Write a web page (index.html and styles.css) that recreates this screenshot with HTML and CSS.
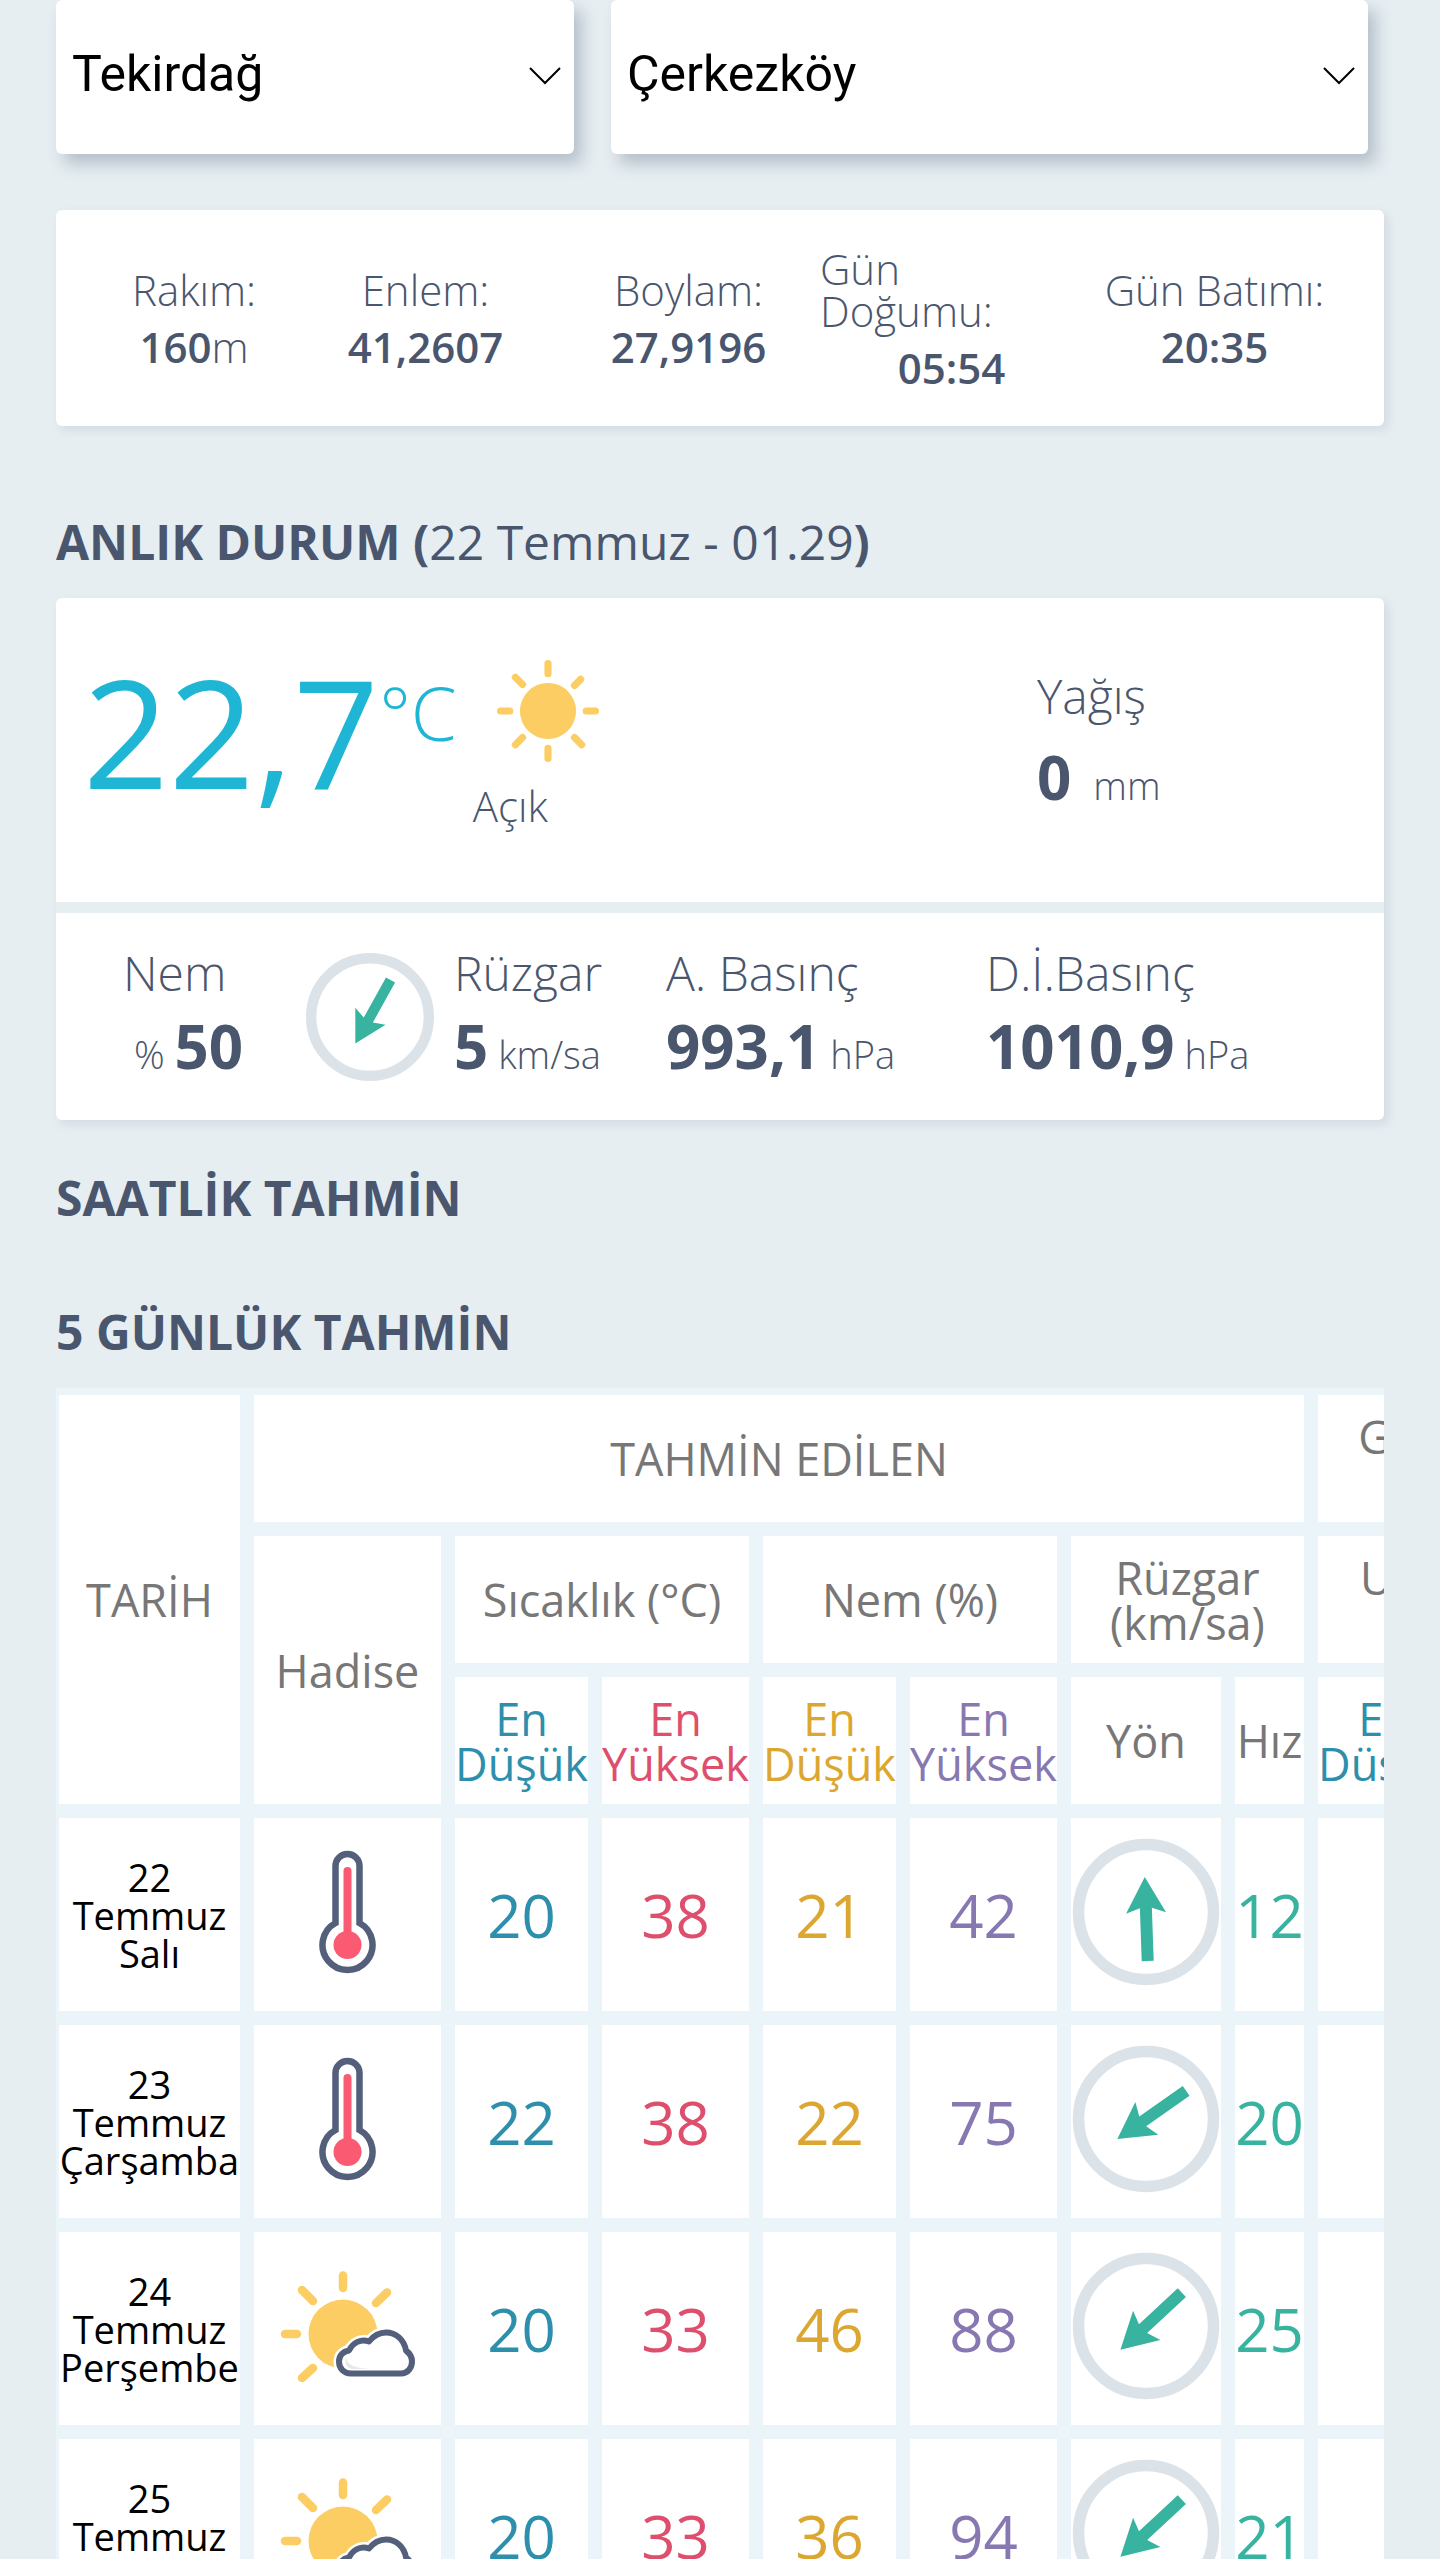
FILE: index.html
```html
<!DOCTYPE html>
<html lang="tr">
<head>
  <meta charset="UTF-8">
  <meta name="viewport" content="width=device-width, initial-scale=1.0">
  <title>Çerkezköy Hava Durumu</title>
  <link rel="stylesheet" href="styles.css">
</head>
<body>
  <!-- Shared icons -->
  <svg class="sprite" aria-hidden="true">
    <symbol id="chevron" viewBox="0 0 32 18">
      <path d="M1 1l15 15L31 1" fill="none" stroke="#000" stroke-width="2"/>
    </symbol>
    <symbol id="hot" viewBox="0 0 187 193">
      <path d="M81.5 105V48a12 12 0 0 1 24 0v57a25 25 0 1 1-24 0z" fill="#fff" stroke="#535f7b" stroke-width="6.5"/>
      <path d="M93.500 53v70" stroke="#fa5a72" stroke-width="8" stroke-linecap="round"/>
      <circle cx="93.500" cy="127" r="14" fill="#fa5a72"/>
    </symbol>
    <symbol id="cloudy" viewBox="0 0 187 193">
      <circle cx="89" cy="102" r="34.500" fill="#fbcd63"/>
      <path d="M89 43.500V56M31 102h12M48 58l11 11M133 60.500L122 71M48 146l11-10" fill="none" stroke="#fbcd63" stroke-width="8.500" stroke-linecap="round"/>
      <path d="M97 141.500h50c7 0 11-6 11-12 0-5-2-8-6-11-2-11-10-18-20-18-8 0-13 4-17 9-8-3-16 1-20 9-6 1-10 5-10 11 0 7 5 12 12 12z" fill="#fff" stroke="#fff" stroke-width="11"/>
      <path d="M97 141.500h50c7 0 11-6 11-12 0-5-2-8-6-11-2-11-10-18-20-18-8 0-13 4-17 9-8-3-16 1-20 9-6 1-10 5-10 11 0 7 5 12 12 12z" fill="#fff" stroke="#535f7b" stroke-width="6" stroke-linejoin="round"/>
      <path d="M92 125c1 8 8 11 24 12H99c-6 0-9-5-7-12z" fill="#e6e8ea"/>
    </symbol>
    <symbol id="ring" viewBox="0 0 150 193">
      <circle cx="75" cy="94" r="67.500" fill="none" stroke="#dbe2e8" stroke-width="11.500"/>
    </symbol>
  </svg>

  <main class="page">
    <form class="location">
      <div class="select-box">
        <select aria-label="İl">
          <option>Tekirdağ</option>
        </select>
        <svg class="chevron"><use href="#chevron"/></svg>
      </div>
      <div class="select-box">
        <select aria-label="İlçe">
          <option>Çerkezköy</option>
        </select>
        <svg class="chevron"><use href="#chevron"/></svg>
      </div>
    </form>

    <section class="card station">
      <div class="station-item"><span>Rakım:</span><div><b>160</b>m</div></div>
      <div class="station-item"><span>Enlem:</span><div><b>41,2607</b></div></div>
      <div class="station-item"><span>Boylam:</span><div><b>27,9196</b></div></div>
      <div class="station-item wrapped"><span>Gün<br>Doğumu:</span><div><b>05:54</b></div></div>
      <div class="station-item"><span>Gün Batımı:</span><div><b>20:35</b></div></div>
    </section>

    <h2 class="first">ANLIK DURUM (<span>22 Temmuz - 01.29</span>)</h2>
    <section class="card current">
      <div class="current-top">
        <div class="temperature">
          <div class="degree">22,7</div>
          <div class="unit">°C</div>
          <div class="condition">
            <svg class="sun" viewBox="0 0 100 100">
              <circle cx="50" cy="50" r="27.500" fill="#fbcd63"/>
              <path d="M50 3.500v10M50 86.500v10M3.500 50h9M87.500 50h9M18 17l7 7M82 19l-6 6M18 83l7-7M83 83l-7-7" fill="none" stroke="#fbcd63" stroke-width="7" stroke-linecap="round"/>
            </svg>
            <div>Açık</div>
          </div>
        </div>
        <div class="rain">
          <div class="label">Yağış</div>
          <div class="value rain-value"><b>0</b><small>mm</small></div>
        </div>
      </div>
      <div class="current-bottom">
        <div>
          <div class="label">Nem</div>
          <div class="value humidity"><small>%</small> <b>50</b></div>
        </div>
        <svg class="wind" viewBox="-74 -74 148 148">
          <circle r="68" fill="none" stroke="#dbe2e8" stroke-width="12"/>
          <path transform="rotate(209)" d="M0-35L20 1 6-4V49H-6V-4L-20 1z" fill="#37b3a0"/>
        </svg>
        <div>
          <div class="label">Rüzgar</div>
          <div class="value"><b>5</b> <small>km/sa</small></div>
        </div>
        <div>
          <div class="label">A. Basınç</div>
          <div class="value"><b>993,1</b> <small>hPa</small></div>
        </div>
        <div>
          <div class="label">D.İ.Basınç</div>
          <div class="value"><b>1010,9</b> <small>hPa</small></div>
        </div>
      </div>
    </section>

    <h2>SAATLİK TAHMİN</h2>
    <h2>5 GÜNLÜK TAHMİN</h2>
    <div class="table-scroll">
      <table class="forecast">
        <colgroup>
          <col class="w-date"><col class="w-event"><col class="w-low"><col class="w-high"><col class="w-low"><col class="w-high"><col class="w-dir"><col class="w-speed"><col class="w-low"><col class="w-high">
        </colgroup>
        <thead>
          <tr>
            <th rowspan="3">TARİH</th>
            <th colspan="7">TAHMİN EDİLEN</th>
            <th colspan="2">GEÇMİŞTE<br>OLAN</th>
          </tr>
          <tr>
            <th rowspan="2">Hadise</th>
            <th colspan="2">Sıcaklık (°C)</th>
            <th colspan="2">Nem (%)</th>
            <th colspan="2">Rüzgar<br>(km/sa)</th>
            <th colspan="2">Uç Hadise<br>(°C)</th>
          </tr>
          <tr>
            <th class="low">En Düşük</th>
            <th class="high">En Yüksek</th>
            <th class="dry">En Düşük</th>
            <th class="humid">En Yüksek</th>
            <th>Yön</th>
            <th>Hız</th>
            <th class="low">En Düşük</th>
            <th class="high">En Yüksek</th>
          </tr>
        </thead>
        <tbody>
          <tr>
            <td class="date">22 Temmuz Salı</td>
            <td><svg class="event"><use href="#hot"/></svg></td>
            <td class="low">20</td>
            <td class="high">38</td>
            <td class="dry">21</td>
            <td class="humid">42</td>
            <td><svg class="direction" viewBox="0 0 150 193"><use href="#ring"/><path transform="translate(75 94) rotate(-2)" d="M0-35L20 1 6-4V49H-6V-4L-20 1z"/></svg></td>
            <td class="speed">12</td>
            <td></td>
            <td></td>
          </tr>
          <tr>
            <td class="date">23 Temmuz Çarşamba</td>
            <td><svg class="event"><use href="#hot"/></svg></td>
            <td class="low">22</td>
            <td class="high">38</td>
            <td class="dry">22</td>
            <td class="humid">75</td>
            <td><svg class="direction" viewBox="0 0 150 193"><use href="#ring"/><path transform="translate(75 94) rotate(235)" d="M0-35L20 1 6-4V49H-6V-4L-20 1z"/></svg></td>
            <td class="speed">20</td>
            <td></td>
            <td></td>
          </tr>
          <tr>
            <td class="date">24 Temmuz Perşembe</td>
            <td><svg class="event"><use href="#cloudy"/></svg></td>
            <td class="low">20</td>
            <td class="high">33</td>
            <td class="dry">46</td>
            <td class="humid">88</td>
            <td><svg class="direction" viewBox="0 0 150 193"><use href="#ring"/><path transform="translate(75 94) rotate(227)" d="M0-35L20 1 6-4V49H-6V-4L-20 1z"/></svg></td>
            <td class="speed">25</td>
            <td></td>
            <td></td>
          </tr>
          <tr>
            <td class="date">25 Temmuz Cuma</td>
            <td><svg class="event"><use href="#cloudy"/></svg></td>
            <td class="low">20</td>
            <td class="high">33</td>
            <td class="dry">36</td>
            <td class="humid">94</td>
            <td><svg class="direction" viewBox="0 0 150 193"><use href="#ring"/><path transform="translate(75 94) rotate(227)" d="M0-35L20 1 6-4V49H-6V-4L-20 1z"/></svg></td>
            <td class="speed">21</td>
            <td></td>
            <td></td>
          </tr>
        </tbody>
      </table>
    </div>
  </main>
</body>
</html>
```
FILE: styles.css
```css
* {
  box-sizing: border-box;
}

body {
  margin: 0;
  font-family: 'Open Sans', 'Noto Sans', sans-serif;
  font-size: 42px;
  font-weight: 300;
  color: #4a566d;
  background: #e6eef2;
}

.sprite {
  display: none;
}

.page {
  height: 100vh;
  padding: 0 56px;
  overflow: hidden auto;
  scrollbar-width: none;
}

.location {
  display: grid;
  grid-template-columns: 518fr 757fr;
  gap: 37px;
  padding-right: 16px;
  margin-bottom: 56px;
}

.select-box {
  position: relative;
}

.select-box select {
  display: block;
  width: 100%;
  height: 154px;
  padding: 0 60px 6px 16px;
  border: none;
  border-radius: 6px;
  appearance: none;
  background: #fff;
  box-shadow: 8px 10px 16px rgba(74, 86, 109, 0.3);
  font-family: Roboto, sans-serif;
  font-size: 50px;
  color: #000;
}

.chevron {
  position: absolute;
  right: 13px;
  top: 67px;
  width: 32px;
  height: 18px;
  pointer-events: none;
}

.card {
  border-radius: 6px;
  background: #fff;
  box-shadow: 4px 4px 10px rgba(74, 86, 109, 0.12);
}

.station {
  display: grid;
  grid-template-columns: 200fr 263fr 263fr 263fr 263fr;
  align-items: center;
  height: 216px;
  padding: 0 38px;
  line-height: 42px;
  text-align: center;
}

.station-item span {
  display: block;
  margin-bottom: 15px;
}

.station-item.wrapped span {
  text-align: left;
}

.station b {
  font-weight: 600;
}

h2 {
  margin: 54px 0 32px;
  font-size: 48px;
  line-height: 48px;
  font-weight: 700;
}

h2 + h2 {
  margin-top: 86px;
}

h2.first {
  margin-top: 92px;
}

h2 span {
  font-weight: 400;
}

.current {
  overflow: hidden;
}

.current-top {
  display: grid;
  grid-template-columns: 981fr 347fr;
  height: 304px;
  padding-top: 58px;
}

.temperature {
  display: flex;
  padding-left: 27px;
  color: #1fb6d5;
}

.degree {
  font-size: 150px;
  line-height: 150px;
  font-weight: 400;
}

.unit {
  margin-top: 20px;
  font-size: 74px;
  line-height: 74px;
}

.condition {
  margin: 4px 0 0 16px;
  line-height: 42px;
  color: #4a566d;
}

.sun {
  display: block;
  width: 102px;
  height: 102px;
  margin: 0 0 23px 24px;
}

.rain {
  padding-top: 16px;
}

.label {
  font-size: 48px;
  line-height: 48px;
}

.value {
  margin-top: 19px;
  font-size: 38px;
  line-height: 60px;
  white-space: nowrap;
}

.value b {
  font-size: 60px;
  font-weight: 700;
}

.value small {
  font-size: 38px;
}

.rain-value {
  margin-top: 27px;
}

.rain-value small {
  margin-left: 22px;
}

.humidity {
  padding-left: 11px;
}

.current-bottom {
  display: grid;
  grid-template-columns: 183fr 148fr 212fr 320fr 398fr;
  height: 218px;
  padding: 36px 0 0 67px;
  border-top: 11px solid #e6eef2;
}

.current-bottom > div {
  min-width: 0;
}

.wind {
  width: 128px;
  height: 128px;
  margin-top: 4px;
}

.table-scroll {
  overflow-x: auto;
  scrollbar-width: none;
  background: #ebf4f9;
}

.forecast {
  table-layout: fixed;
  width: 1481px;
  margin: -7px 0 0 -11px;
  border-collapse: separate;
  border-spacing: 14px;
}

.w-date {
  width: 181px;
}

.w-event {
  width: 187px;
}

.w-low {
  width: 133px;
}

.w-high {
  width: 147px;
}

.w-dir {
  width: 150px;
}

.w-speed {
  width: 69px;
}

.forecast th,
.forecast td {
  padding: 0;
  text-align: center;
  vertical-align: middle;
  background: #fff;
}

.forecast th {
  height: 127px;
  font-size: 45px;
  line-height: 45px;
  font-weight: 400;
  color: #777;
}

.forecast td {
  height: 193px;
  font-size: 60px;
  line-height: 60px;
  font-weight: 400;
}

.forecast td.date {
  font-size: 38px;
  line-height: 38px;
  color: #000;
}

.forecast .low {
  color: #2e8fad;
}

.forecast .high {
  color: #de4f6d;
}

.forecast .dry {
  color: #dca730;
}

.forecast .humid {
  color: #8878b2;
}

.forecast .speed {
  color: #37b3a0;
}

.event,
.direction {
  display: block;
  width: 100%;
  height: 193px;
}

.direction {
  fill: #37b3a0;
}
```
